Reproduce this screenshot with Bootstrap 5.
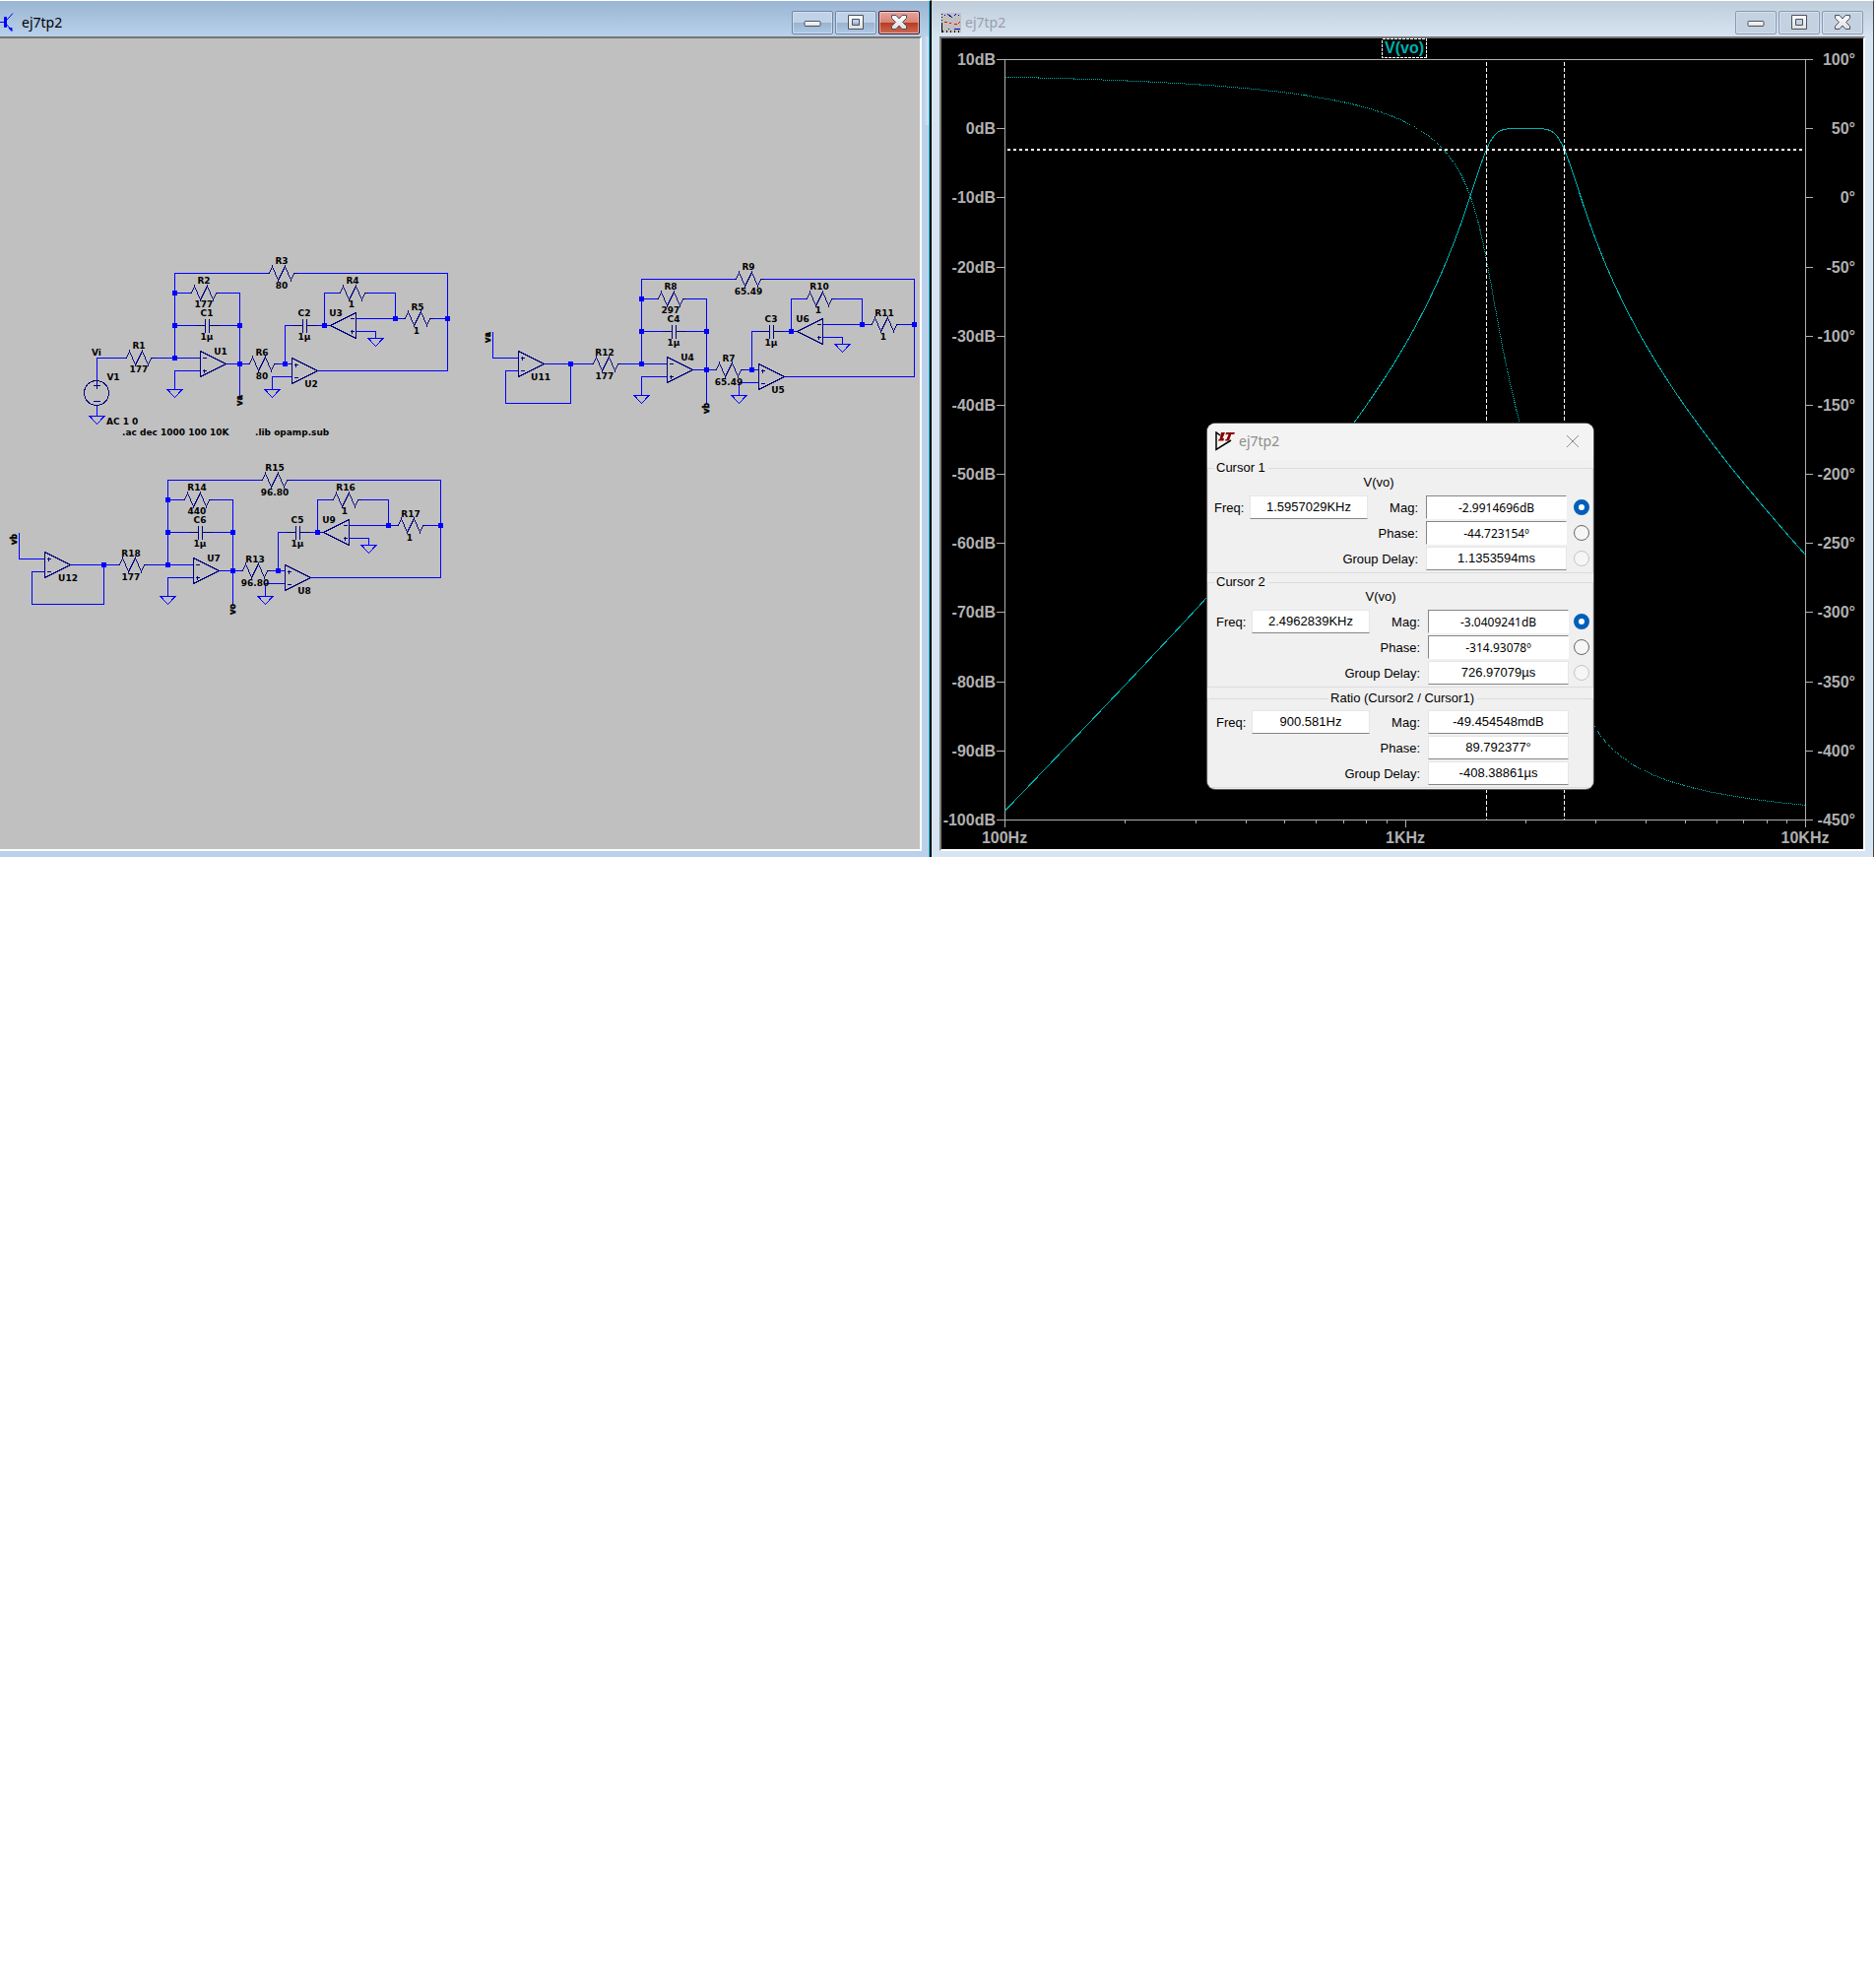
<!DOCTYPE html>
<html lang="en">
<head>
<meta charset="utf-8">
<meta name="viewport" content="width=device-width, initial-scale=1">
<title>ej7tp2</title>
<link href="https://cdn.jsdelivr.net/npm/bootstrap@5.3.0/dist/css/bootstrap.min.css" rel="stylesheet">
<style>
body{background:#fff;font-family:"Liberation Sans",Arial,sans-serif;color:#000}
.desk{display:grid;grid-template-columns:946fr 959fr}
.win{min-width:0;border-top:1px solid #fff}
.win-schem{background:linear-gradient(90deg,#dbe7f500,#dbe7f5) right 0 top 36px/6px 90px no-repeat,#b9d1ea;border-right:2px solid #000;box-shadow:inset -1px 0 #2fc3e0}
.win-plot{background:#d7e4f2;border-right:1px solid #444;margin-right:2px}
.titlebar{height:36px;font:14px/20px "Noto Sans",sans-serif}
.win-schem .titlebar{background:linear-gradient(#9ab5d3,#b9d1ea);margin-right:1px;padding:7px 9px 0 0}
.win-plot .titlebar{background:linear-gradient(#bfcddb,#d7e4f2);color:#9a9fa5;padding:7px 10px 0 10px}
.titlebar .btnset{gap:2px}
.capbtn{width:42px;height:24px;padding:0;border:1px solid #7186a5;border-radius:2px;box-shadow:inset 0 0 0 1px #dce8f5a0;background:linear-gradient(#bfd2e8 48%,#98b3d0 50%,#b0c9e4)}
.win-plot .capbtn{background:#c3d1e1;border-color:#8a98b3}
.win-schem .capbtn-x{background:linear-gradient(#e7a498,#d98475 48%,#b53a22 50%,#d06a50);border-color:#4d1420}
.capbtn svg,.client>svg,.dlg svg{display:block}
.capbtn svg{margin:auto}
.client{border:2px solid #fff;border-top-color:#757575;position:relative}
.win-schem .client{border-left:0;margin:0 8px 6px 0;background:#c0c0c0}
.win-plot .client{border-left-color:#808080;margin:0 8px 6px;background:#000}
.part{font:bold 9px "DejaVu Sans",sans-serif}
.net{font:bold 9px "Liberation Mono",monospace;stroke:#000;stroke-width:.6px}
.axis{font:bold 16px "Liberation Sans",Arial,sans-serif;fill:#b0b0b0}
.trace{fill:#00b0b0}
.dlg{position:absolute;left:270px;top:391px;width:392px;background:#f0f0f0;border-radius:8px;overflow:hidden;font-size:13px;line-height:16px;padding-bottom:1px;box-shadow:0 0 0 1px #555}
.dlg-head{height:37px;background:#f3f3f3;color:#8c8c8c;font:14px/20px "Noto Sans",sans-serif;padding:0 14px 1px 8px}
.dlg fieldset{border:1px solid #dcdcdc;padding:0 3px 2px 6px;margin:0 0 1px}
.dlg fieldset+fieldset{padding-left:8px;margin-bottom:3px}
.dlg fieldset:last-of-type{margin-bottom:0}
.dlg legend{float:none;width:auto;font-size:13px;line-height:16px;margin:0;padding:0 3px 0 2px}
.dlg fieldset+fieldset legend{margin-left:-2px}
.dlg fieldset:last-of-type legend{margin:0 auto}
.tracename{width:334px;text-align:center;height:16px;line-height:14px}
.readout{display:grid;grid-template-columns:36px 120px 59px 143px 1fr;grid-auto-rows:24px;row-gap:2px;align-items:center;margin-top:4px}
.readout label{padding-top:2px}
.readout label.far{grid-column:1/4}
.readout .form-control{height:24px;min-height:0;padding:0 0 2px;border:1px solid #e6e6e6;border-bottom-color:#868686;border-radius:0;text-align:center;font-size:13px;line-height:16px;color:#000;background:#fff}
.readout .form-control.sunk{border-color:#868686 #fff #fff #868686;padding:0;font:12px/16px "Noto Sans",sans-serif}
.readout .form-check-input{width:16px;height:16px;margin:0;border:1px solid #666;background:#f6f6f6;justify-self:end}
.readout .form-check-input:checked{border:5px solid #005fb8;background:#fff}
.readout .form-check-input:disabled{border-color:#c4c4c4;opacity:1}
</style>
<script src="https://cdn.jsdelivr.net/npm/bootstrap@5.3.0/dist/js/bootstrap.bundle.min.js"></script>
</head>
<body>
<svg width="0" height="0" class="position-absolute" aria-hidden="true">
 <defs>
  <linearGradient id="chrome" x2="0" y2="1"><stop stop-color="#fff"/><stop offset="1" stop-color="#ddd"/></linearGradient>
  <symbol id="i-min" viewBox="0 0 18 18"><rect x="1" y="7.500" width="16" height="5" rx="1" fill="url(#chrome)" stroke="#4b5061"/></symbol>
  <symbol id="i-max" viewBox="0 0 18 18"><path fill="url(#chrome)" fill-rule="evenodd" stroke="#4b5061" d="M1.500 1.500h15v14h-15zM5.500 5.500v6h7v-6z"/></symbol>
  <symbol id="i-close" viewBox="0 0 18 18"><path fill="url(#chrome)" stroke="#4b5061" stroke-linejoin="round" d="M1.500 1.500h4.500l3 3.500 3-3.500h4.500v3l-4 4 4 4v3h-4.500l-3-3.500-3 3.500H1.500v-3l4-4-4-4z"/></symbol>
  <path id="res" d="M0 0h2l3-7 6 14 7-14 6 14 3-7h3"/>
  <path id="cap" d="M-12 0h10M2 0h10M-2-7v14M2-7v14"/>
  <path id="gnd" d="M-7.500 0h15l-7.500 8z"/>
  <path id="amp" d="M0-13v26l26-13zM2-6h4M2 7h4"/>
  <path id="up" d="M4-8v4"/><path id="dn" d="M4 5v4"/>
  <rect id="dot" x="-2.500" y="-2.500" width="5" height="5" fill="#00f" stroke="none"/>
  <g id="stage">
   <path stroke="#00f" d="M203.500 363.500H177.500V277.500H271.500M301.500 277.500H454.500V376.500H322.500M177.500 297.500H192.500M222.500 297.500H243.500V403.500M177.500 330.500H198.500M222.500 330.500H243.500M229.500 369.500H251.500M281.500 369.500H296.500M203.500 376.500H177.500V395.500M289.500 369.500V330.500H297.500M321.500 330.500H335.500M329.500 330.500V297.500H343.500M373.500 297.500H401.500V323.500M361.500 323.500H409.500M439.500 323.500H454.500M361.500 336.500H381.500V343.500M296.500 382.500H276.500V395.500"/>
   <g stroke="#000080">
    <use href="#res" x="271.500" y="277.500"/><use href="#res" x="192.500" y="297.500"/><use href="#res" x="251.500" y="369.500"/><use href="#res" x="343.500" y="297.500"/><use href="#res" x="409.500" y="323.500"/>
    <use href="#cap" x="210.500" y="330.500"/><use href="#cap" x="309.500" y="330.500"/>
    <use href="#amp" x="203.500" y="369.500"/><use href="#dn" x="203.500" y="369.500"/>
    <use href="#amp" x="296.500" y="376.500"/><use href="#up" x="296.500" y="376.500"/>
    <path d="M361.500 317.500v26l-26-13zM355.500 323.500h4M355.500 336.500h4M357.500 334.500v4"/>
   </g>
   <g stroke="#00f"><use href="#gnd" x="177.500" y="395.500"/><use href="#gnd" x="276.500" y="395.500"/><use href="#gnd" x="381.500" y="343.500"/></g>
   <use href="#dot" x="177.500" y="297.500"/><use href="#dot" x="177.500" y="330.500"/><use href="#dot" x="177.500" y="363.500"/><use href="#dot" x="243.500" y="330.500"/><use href="#dot" x="243.500" y="369.500"/><use href="#dot" x="289.500" y="369.500"/><use href="#dot" x="329.500" y="330.500"/><use href="#dot" x="401.500" y="323.500"/><use href="#dot" x="454.500" y="323.500"/>
  </g>
 </defs>
</svg>

<main class="desk">
 <section class="win win-schem">
  <header class="titlebar d-flex align-items-center gap-2">
   <svg width="14" height="20" viewBox="0 0 14 20" fill="none" stroke="#00f"><path d="M0 9.500h4M7 7l2-2M9 5l4-4.500M7 12l5 6"/><path fill="#00f" d="M4.500 4.500h2v10h-2zM9 15.500h3v3z"/></svg>
   <span>ej7tp2</span>
   <div class="btnset d-flex ms-auto">
    <button class="capbtn" aria-label="Minimize"><svg width="18" height="18"><use href="#i-min"/></svg></button>
    <button class="capbtn" aria-label="Maximize"><svg width="18" height="18"><use href="#i-max"/></svg></button>
    <button class="capbtn capbtn-x" aria-label="Close"><svg width="18" height="18"><use href="#i-close"/></svg></button>
   </div>
  </header>
  <div class="client">
   <svg class="w-100" viewBox="0 39 934 823" role="img" aria-label="Schematic">
    <g fill="none" shape-rendering="crispEdges">
     <use href="#stage"/><use href="#stage" transform="translate(474 6)"/><use href="#stage" transform="translate(-7 210)"/>
     <path stroke="#00f" d="M98.500 385.500V363.500H126.500M156.500 363.500H177.500M98.500 411.500V422.500M500.500 336.500V363.500H526.500M526.500 376.500H513.500V409.500H579.500V369.500M552.500 369.500H600.500M630.500 369.500H651.500M19.500 540.500V567.500H45.500M45.500 580.500H32.500V613.500H105.500V573.500M71.500 573.500H119.500M149.500 573.500H170.500"/>
     <g stroke="#000080">
      <use href="#res" x="126.500" y="363.500"/><use href="#res" x="600.500" y="369.500"/><use href="#res" x="119.500" y="573.500"/>
      <use href="#amp" x="526.500" y="369.500"/><use href="#up" x="526.500" y="369.500"/>
      <use href="#amp" x="45.500" y="573.500"/><use href="#up" x="45.500" y="573.500"/>
      <circle cx="98" cy="399" r="12.500"/><path d="M98.500 387v8M95 391.500h7M95 407.500h7"/>
     </g>
     <use href="#gnd" x="98.500" y="422.500" stroke="#00f"/>
     <use href="#dot" x="579.500" y="369.500"/><use href="#dot" x="105.500" y="573.500"/>
    </g>
    <g id="labels" class="part" text-anchor="middle"></g>
    <g class="part"><text x="108" y="431">AC 1 0</text><text x="124" y="442">.ac dec 1000 100 10K</text><text x="259" y="442">.lib opamp.sub</text></g>
    <g class="net">
     <text transform="translate(246 412) rotate(-90)">va</text><text transform="translate(720 420) rotate(-90)">vb</text><text transform="translate(239 624) rotate(-90)">vo</text>
     <text transform="translate(498 348) rotate(-90)">va</text><text transform="translate(17 553) rotate(-90)">vb</text>
    </g>
   </svg>
  </div>
 </section>

 <section class="win win-plot">
  <header class="titlebar d-flex align-items-center gap-1">
   <svg width="20" height="20" viewBox="0 0 20 20" fill="none"><path fill="#c0c0c0" d="M0 0h20v20H0z"/><g shape-rendering="crispEdges"><path stroke="#000" stroke-dasharray="1 2" d="M.5 1v8"/><path stroke="#000" d="M.5 10v10"/><path stroke="#000" stroke-width="2" stroke-dasharray="1 3" d="M1 19h19"/><path stroke="#0000b0" d="M3 3l1-1M6 1l5 4M13 3l2-2M17 3l1-1M7 17l1-1M13 16.500h6"/><path stroke="red" stroke-dasharray="3 2" d="M3 9.500h4l4 2h4l4-2"/></g></svg>
   <span>ej7tp2</span>
   <div class="btnset d-flex ms-auto">
    <button class="capbtn" aria-label="Minimize"><svg width="18" height="18"><use href="#i-min"/></svg></button>
    <button class="capbtn" aria-label="Maximize"><svg width="18" height="18"><use href="#i-max"/></svg></button>
    <button class="capbtn capbtn-x" aria-label="Close"><svg width="18" height="18"><use href="#i-close"/></svg></button>
   </div>
  </header>
  <div class="client">
   <svg class="w-100" viewBox="956 39 936 823" role="img" aria-label="Bode plot of V(vo)">
    <g fill="none" shape-rendering="crispEdges">
     <path id="grid" stroke="#b0b0b0"/>
     <path id="phase" stroke="#00b0b0" stroke-dasharray="1 1"/>
     <path id="mag" stroke="#00b0b0"/>
     <path stroke="#fff" stroke-dasharray="4 2" d="M1509.500 63V832M1588.500 63V832"/>
     <path stroke="#fff" stroke-width="2" stroke-dasharray="3 3" d="M1023 152H1831"/>
     <rect x="1403.500" y="39.500" width="45" height="19" stroke="#fff" stroke-dasharray="3 1"/>
    </g>
    <g id="ticks" class="axis"></g>
    <text class="axis trace" x="1426" y="54" text-anchor="middle">V(vo)</text>
   </svg>

   <form class="dlg">
    <div class="dlg-head d-flex align-items-center">
     <svg width="20" height="20" viewBox="0 0 20 20" class="me-1"><path fill="none" stroke="#000" stroke-width="1.500" d="M16 9L1 18.500V1l4 3"/><path fill="#8b0000" d="M6 1h4L7.500 7H9l-.5 2.500H3L3.600 8H4.500zM11 1h9l-.8 2h-3L14 9.500h-4l.5-1.500h1L13.500 3h-2l-1 1z"/></svg>
     <span>ej7tp2</span>
     <button type="button" class="ms-auto p-0 border-0 bg-transparent" aria-label="Close dialog"><svg width="14" height="14" stroke="#8c8c8c"><path d="M1 1l12 12M13 1L1 13"/></svg></button>
    </div>
    <fieldset>
     <legend>Cursor 1</legend>
     <div class="tracename">V(vo)</div>
     <div class="readout">
      <label for="f1">Freq:</label><input class="form-control" id="f1" value="1.5957029KHz">
      <label class="text-end pe-2" for="m1">Mag:</label><input class="form-control sunk" id="m1" value="-2.9914696dB"><input class="form-check-input" type="radio" name="c1" aria-label="Magnitude, cursor 1" checked>
      <label class="far text-end pe-2" for="p1">Phase:</label><input class="form-control sunk" id="p1" value="-44.723154º"><input class="form-check-input" type="radio" name="c1" aria-label="Phase, cursor 1">
      <label class="far text-end pe-2" for="g1">Group Delay:</label><input class="form-control" id="g1" value="1.1353594ms"><input class="form-check-input" type="radio" name="c1" aria-label="Group delay, cursor 1" disabled>
     </div>
    </fieldset>
    <fieldset>
     <legend>Cursor 2</legend>
     <div class="tracename">V(vo)</div>
     <div class="readout">
      <label for="f2">Freq:</label><input class="form-control" id="f2" value="2.4962839KHz">
      <label class="text-end pe-2" for="m2">Mag:</label><input class="form-control sunk" id="m2" value="-3.0409241dB"><input class="form-check-input" type="radio" name="c2" aria-label="Magnitude, cursor 2" checked>
      <label class="far text-end pe-2" for="p2">Phase:</label><input class="form-control sunk" id="p2" value="-314.93078º"><input class="form-check-input" type="radio" name="c2" aria-label="Phase, cursor 2">
      <label class="far text-end pe-2" for="g2">Group Delay:</label><input class="form-control" id="g2" value="726.97079µs"><input class="form-check-input" type="radio" name="c2" aria-label="Group delay, cursor 2" disabled>
     </div>
    </fieldset>
    <fieldset>
     <legend>Ratio (Cursor2 / Cursor1)</legend>
     <div class="readout">
      <label for="f3">Freq:</label><input class="form-control" id="f3" value="900.581Hz">
      <label class="text-end pe-2" for="m3">Mag:</label><input class="form-control" id="m3" value="-49.454548mdB"><span></span>
      <label class="far text-end pe-2" for="p3">Phase:</label><input class="form-control" id="p3" value="89.792377°"><span></span>
      <label class="far text-end pe-2" for="g3">Group Delay:</label><input class="form-control" id="g3" value="-408.38861µs"><span></span>
     </div>
    </fieldset>
   </form>
  </div>
 </section>
</main>

<script>
const NS = 'http://www.w3.org/2000/svg';
function put(parent, x, y, s, anchor) {
  const t = document.createElementNS(NS, 'text');
  t.setAttribute('x', x); t.setAttribute('y', y);
  if (anchor) t.setAttribute('text-anchor', anchor);
  t.textContent = s; parent.appendChild(t);
}
// Part labels: the three filter stages share one layout
const spots = [[286,268],[286,293],[207,288],[207,312],[210,321],[210,345],[224,360],[266,361],[266,385],[316,393],[309,321],[309,345],[341,321],[358,288],[357,312],[424,315],[423,339]];
const stages = [
  [0, 0, 'R3 80 R2 177 C1 1µ U1 R6 80 U2 C2 1µ U3 R4 1 R5 1'],
  [474, 6, 'R9 65.49 R8 297 C4 1µ U4 R7 65.49 U5 C3 1µ U6 R10 1 R11 1'],
  [-7, 210, 'R15 96.80 R14 440 C6 1µ U7 R13 96.80 U8 C5 1µ U9 R16 1 R17 1']
];
const labels = document.getElementById('labels');
for (const [dx, dy, names] of stages)
  names.split(' ').forEach((s, i) => put(labels, spots[i][0] + dx, spots[i][1] + dy, s));
[[141,354,'R1'],[98,361,'Vi'],[115,386,'V1'],[614,361,'R12'],[549,386,'U11'],[133,565,'R18'],[69,590,'U12'],[141,378,'177'],[614,385,'177'],[133,589,'177']].forEach(a => put(labels, ...a));

// Axes
const X0 = 1020, X1 = 1833, Y0 = 60, Y1 = 832;
const fx = f => X0 + (Math.log10(f) - 2) / 2 * (X1 - X0);
const yd = db => Y0 + (10 - db) / 110 * (Y1 - Y0);
const yp = p => Y0 + (100 - p) / 550 * (Y1 - Y0);
const ticks = document.getElementById('ticks');
let g = `M1012 60.5H1841M1012 832.5H1841M1020.5 60V840M1833.5 60V840`;
for (let i = 0; i < 12; i++) {
  const y = Math.round(yd(10 - 10 * i));
  if (i > 0 && i < 11) g += `M1012 ${y}.5H1020M1834 ${y}.5H1841`;
  put(ticks, 1011, y + 6, (10 - 10 * i) + 'dB', 'end');
  put(ticks, 1884, y + 6, (100 - 50 * i) + '°', 'end');
}
for (const d of [100, 1000]) for (let k = 1; k < 10; k++)
  g += `M${Math.round(fx(d * k))}.5 832V${k === 1 ? 840 : 836}`;
document.getElementById('grid').setAttribute('d', g);
[[1020,'100Hz'],[1427,'1KHz'],[1833,'10KHz']].forEach(([x, s]) => put(ticks, x, 856, s, 'middle'));

// Third-order Butterworth band-pass between the two cursor frequencies
const fa = 1595.7029, fb = 2496.2839, fc = Math.sqrt(fa * fb), Q = fc / (fb - fa);
let m = '', p = '';
for (let x = X0; x <= X1; x++) {
  const f = 10 ** (2 + (x - X0) / (X1 - X0) * 2), w = Q * (f / fc - fc / f);
  const db = -10 * Math.log10(1 + w ** 6);
  const ph = -180 - (Math.atan(w) + Math.atan2(w, 1 - w * w)) * 180 / Math.PI;
  m += (m ? 'L' : 'M') + (x + .5) + ' ' + (yd(db) + .5).toFixed(1);
  p += (p ? 'L' : 'M') + (x + .5) + ' ' + (yp(ph) + .5).toFixed(1);
}
document.getElementById('mag').setAttribute('d', m);
document.getElementById('phase').setAttribute('d', p);
</script>
</body>
</html>
